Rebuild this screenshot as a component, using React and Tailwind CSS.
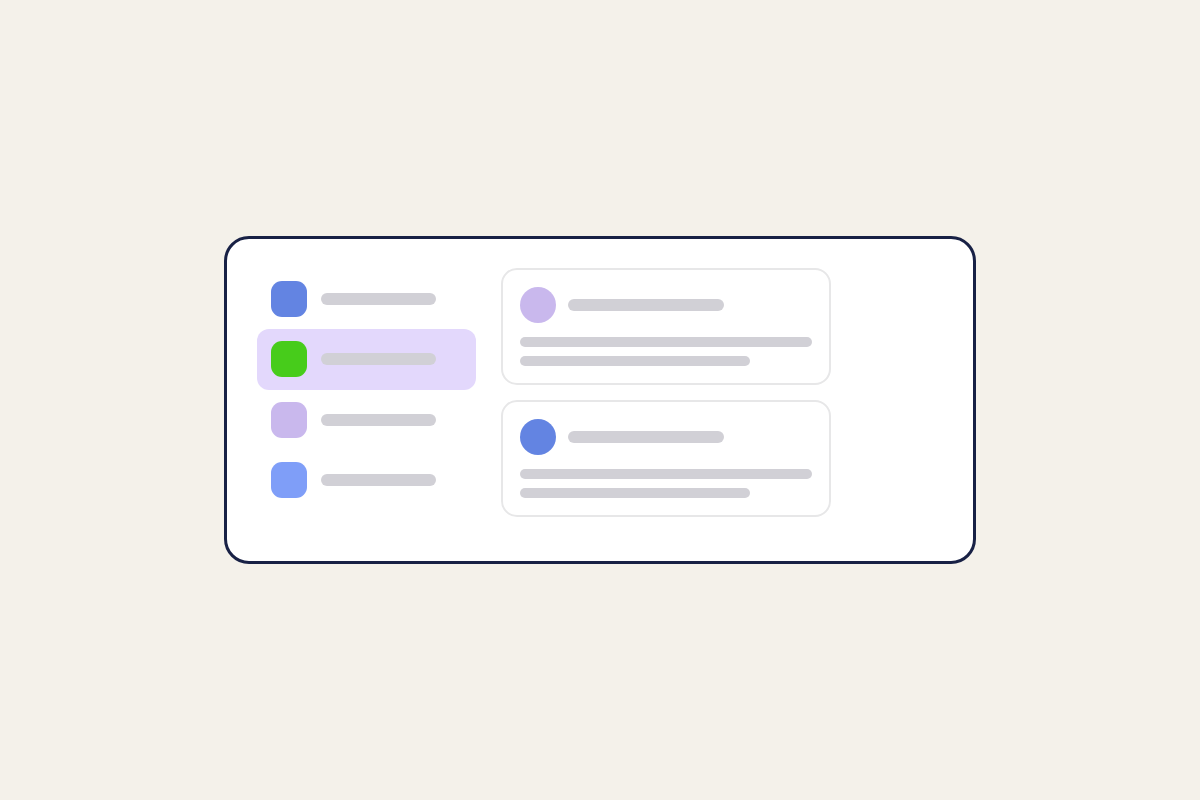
import React from 'react';

const menuItems = [
    { id: 'blue', color: 'bg-[#6384e2]' },
    { id: 'green', color: 'bg-[#47cc1b]', active: true },
    { id: 'lilac', color: 'bg-[#c9b8ed]' },
    { id: 'sky', color: 'bg-[#7f9ef8]' },
];

const posts = [
    { id: 'first', color: 'bg-[#c9b8ed]' },
    { id: 'second', color: 'bg-[#6384e2]' },
];

const Bar = ({ className }) => (
    <div className={`rounded-full bg-[#d1d0d6] ${className}`} />
);

const MenuItem = ({ color, active }) => (
    <li className={`flex flex-1 items-center gap-3.5 rounded-xl px-3.5 ${active ? 'bg-[#e3d8fc]' : ''}`}>
        <div className={`size-9 shrink-0 rounded-[11px] ${color}`} />
        <Bar className="h-3 w-[115px]" />
    </li>
);

const PostCard = ({ color }) => (
    <article className="rounded-2xl border-2 border-[#e7e7e8] p-[17px]">
        <div className="flex items-center gap-3">
            <div className={`size-9 shrink-0 rounded-full ${color}`} />
            <Bar className="h-3 w-[156px]" />
        </div>
        <Bar className="mt-3.5 h-2.5 w-full" />
        <Bar className="mt-[9px] h-2.5 w-[230px] max-w-full" />
    </article>
);

const App = () => {
    return (
        <main className="flex min-h-screen items-center justify-center bg-[#f4f1ea]">
            <div className="flex w-full max-w-[752px] items-start gap-[25px] rounded-[25px] border-3 border-[#182145] bg-white px-[30px] pt-[29px] pb-11">
                {/* Sidebar */}
                <nav className="w-[219px] shrink-0 pt-px">
                    <ul className="flex h-[241px] flex-col">
                        {menuItems.map((item) => (
                            <MenuItem key={item.id} color={item.color} active={item.active} />
                        ))}
                    </ul>
                </nav>

                {/* Feed */}
                <section className="flex w-full max-w-[330px] flex-col gap-[15px]">
                    {posts.map((post) => (
                        <PostCard key={post.id} color={post.color} />
                    ))}
                </section>
            </div>
        </main>
    );
};

export default App;
